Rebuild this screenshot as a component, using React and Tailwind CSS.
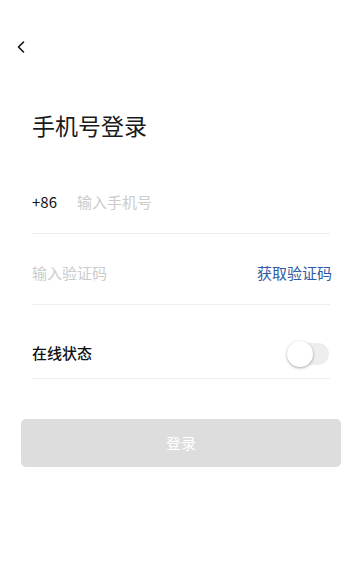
import React, { useState } from "react";

const font = { fontFamily: '"Noto Sans CJK SC", "Noto Sans", sans-serif' };

const App = () => {
  const [online, setOnline] = useState(false);

  return (
    <div className="w-[360px] h-[587px] bg-white flex flex-col" style={font}>
      <div className="h-[108px] pl-[15px] pt-[39px]">
        <svg width="14" height="16" viewBox="0 0 14 16" fill="none">
          <path d="M8.5 3 L3.5 8 L8.5 13" stroke="#111" strokeWidth="1.6" strokeLinecap="round" strokeLinejoin="round" />
        </svg>
      </div>

      <h1 className="pl-8 text-[23px] leading-[34px] text-[#1a1a1a] font-normal">手机号登录</h1>

      <div className="pl-8 pr-[30px] mt-[22px]">
        <div className="flex items-center h-[70px] pt-[8px] border-b border-[#eeeeee]">
          <span className="text-[15px] text-[#111] w-[45px]">+86</span>
          <span className="text-[15px] text-[#cccccc]">输入手机号</span>
        </div>
        <div className="flex items-center justify-between h-[71px] pt-[8px] border-b border-[#eeeeee]">
          <span className="text-[15px] text-[#cccccc]">输入验证码</span>
          <span className="text-[15px] text-[#2f5aa5] -mr-[2px]">获取验证码</span>
        </div>
        <div className="flex items-center justify-between h-[74px] pt-[24px] border-b border-[#eeeeee]">
          <span className="text-[15px] text-[#111] font-medium">在线状态</span>
          <button
            onClick={() => setOnline(!online)}
            className={`relative w-[40px] h-[22px] rounded-full mr-[1px] ${online ? "bg-[#4cd964]" : "bg-[#eeeeee]"}`}
          >
            <span
              className={`absolute top-[-2px] w-[26px] h-[26px] rounded-full bg-white shadow-[0_1px_3px_rgba(0,0,0,0.35)] ${online ? "left-[16px]" : "left-[-2px]"}`}
            />
          </button>
        </div>
      </div>

      <div className="ml-[21px] mr-[19px] mt-[40px]">
        <button className="w-full h-[48px] rounded-[5px] bg-[#dddddd] text-white text-[15px]">登录</button>
      </div>
    </div>
  );
};

export default App;
